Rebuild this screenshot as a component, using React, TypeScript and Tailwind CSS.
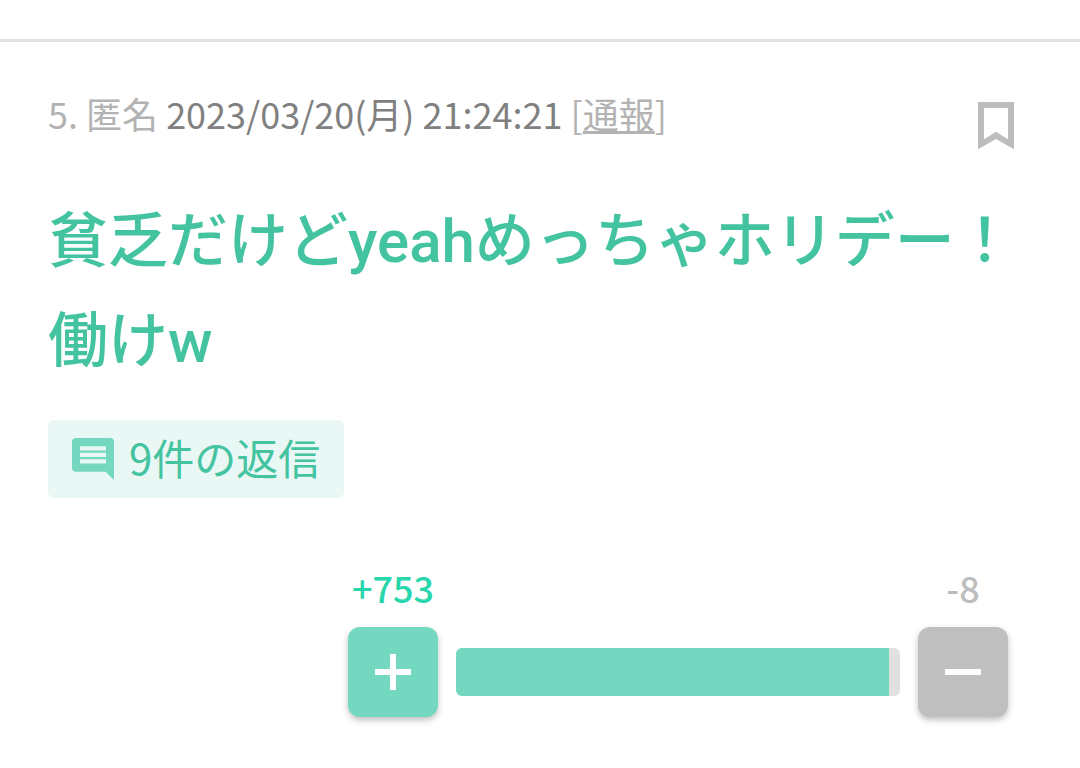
import { useState } from "react";

type Vote = "plus" | "minus";

const PLUS_COUNT = 753;
const MINUS_COUNT = 8;
const PLUS_SHARE = 97.5;

function BookmarkIcon() {
  return (
    <svg viewBox="0 0 36 48" className="h-12 w-9" fill="#bdbdbd" aria-hidden="true">
      <path fillRule="evenodd" d="M0 0h36v47.3L18 37 0 47.3zM6 6v31.2l12-7.4 12 7.4V6z" />
    </svg>
  );
}

function CommentIcon() {
  return (
    <svg viewBox="0 0 42 42" className="size-[42px] shrink-0" aria-hidden="true">
      <path d="M4 0h34a4 4 0 0 1 4 4v38l-8.4-8.2H4a4 4 0 0 1-4-4V4a4 4 0 0 1 4-4z" fill="#73d8bf" />
      <path d="M8 8.2h26v4.2H8zM8 14.8h26V19H8zM8 21.2h26v4.2H8z" fill="#e9f8f5" />
    </svg>
  );
}

function VoteIcon({ vote }: { vote: Vote }) {
  return (
    <svg viewBox="0 0 36 36" className="size-9" fill="#fff" aria-hidden="true">
      <path d={vote === "plus" ? "M15 0h6v15h15v6H21v15h-6V21H0v-6h15z" : "M0 15h36v6H0z"} />
    </svg>
  );
}

export default function App() {
  const [saved, setSaved] = useState(false);
  const [voted, setVoted] = useState<Vote | null>(null);

  return (
    <article className="bg-white pt-[39px] pb-12 font-['Noto_Sans_CJK_JP',sans-serif]">
      <hr className="border-t-3 border-[#e0e0e0]" />
      <div className="px-12 pt-12">
        <header className="flex items-start justify-between">
          <p className="text-4xl leading-[46px] text-[#b3b3b3]">
            5. 匿名{" "}
            <time className="text-[#808080]" dateTime="2023-03-20T21:24:21">
              2023/03/20(月) 21:24:21
            </time>{" "}
            [<a href="#report" className="underline">通報</a>]
          </p>
          <button
            type="button"
            aria-label="保存"
            aria-pressed={saved}
            onClick={() => setSaved(!saved)}
            className="mt-3 mr-[18px]"
          >
            <BookmarkIcon />
          </button>
        </header>

        <p className="mt-[42px] font-['Roboto','Noto_Sans_CJK_JP',sans-serif] text-[60px] leading-[100px] font-medium text-[#44c3a0]">
          貧乏だけどyeahめっちゃホリデー！
          <br />
          働けw
        </p>

        <a
          href="#replies"
          className="mt-7 flex h-[78px] w-fit items-center gap-[15px] rounded-md bg-[#e9f8f5] px-6 text-[42px] leading-[60px] text-[#44c3a0]"
        >
          <CommentIcon />
          <span className="pb-1">9件の返信</span>
        </a>

        <div className="mt-16 mr-6 ml-auto grid max-w-[660px] grid-cols-[90px_1fr_90px] items-center gap-x-[18px] gap-y-[15px]">
          <output htmlFor="vote-plus" className="text-center text-[36px] leading-[50px] font-medium text-[#27d6ab]">
            +{PLUS_COUNT}
          </output>
          <output
            htmlFor="vote-minus"
            className="col-start-3 text-center text-[36px] leading-[50px] font-medium text-[#bdbdbd]"
          >
            -{MINUS_COUNT}
          </output>

          <button
            id="vote-plus"
            type="button"
            aria-label="プラス"
            aria-pressed={voted === "plus"}
            onClick={() => setVoted("plus")}
            className="flex size-[90px] items-center justify-center rounded-xl bg-[#73d8bf] shadow-[0_3px_6px_rgba(0,0,0,0.25)]"
          >
            <VoteIcon vote="plus" />
          </button>
          <div className="h-12 overflow-hidden rounded-md bg-[#e0e0e0]">
            <div className="h-full bg-[#73d8bf]" style={{ width: `${PLUS_SHARE}%` }} />
          </div>
          <button
            id="vote-minus"
            type="button"
            aria-label="マイナス"
            aria-pressed={voted === "minus"}
            onClick={() => setVoted("minus")}
            className="flex size-[90px] items-center justify-center rounded-xl bg-[#bfbfbf] shadow-[0_3px_6px_rgba(0,0,0,0.25)]"
          >
            <VoteIcon vote="minus" />
          </button>
        </div>
      </div>
    </article>
  );
}
